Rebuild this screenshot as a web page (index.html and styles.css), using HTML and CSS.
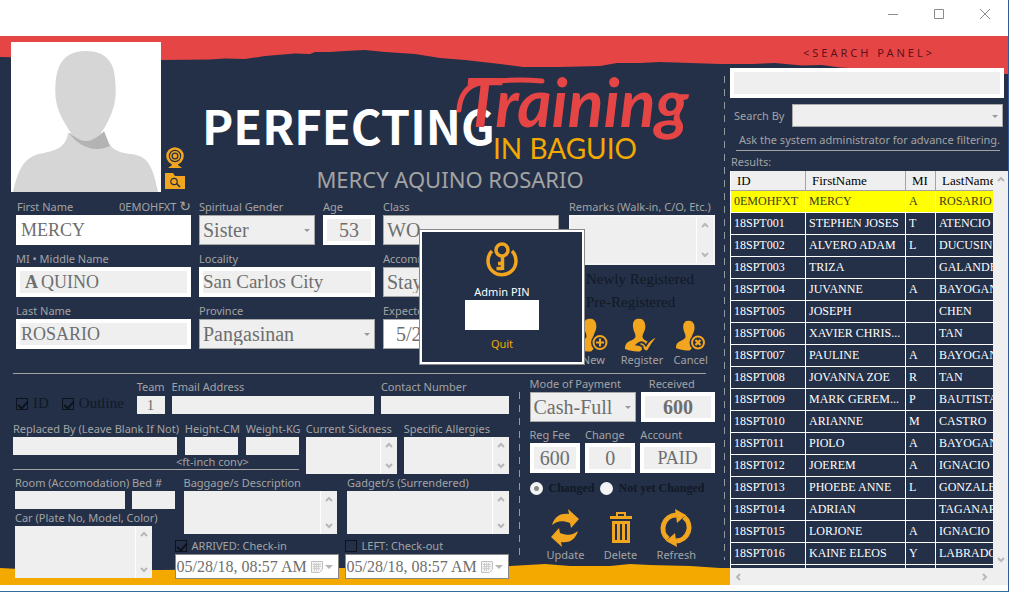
FILE: index.html
```html
<!DOCTYPE html>
<html lang="en">
<head>
<meta charset="utf-8">
<title>Perfecting Training in Baguio</title>
<link rel="stylesheet" href="styles.css">
</head>
<body>
<svg class="defs" aria-hidden="true">
  <symbol id="up" viewBox="0 0 8 6"><path d="M1 5 4 2l3 3" fill="none" stroke="#b8b8b8" stroke-width="2"/></symbol>
  <symbol id="down" viewBox="0 0 8 6"><path d="M1 1l3 3 3-3" fill="none" stroke="#b8b8b8" stroke-width="2"/></symbol>
  <symbol id="person" viewBox="0 0 34 34"><path d="M14 0C9.500 0 7.500 3.500 8 8.500c.4 4 2.500 6 2.500 9C10.500 20 8 21 5 22.500 1.500 24 0 26 0 30.500c5 2 10 2.500 15 2.500l9-9c-3-2-6.500-3-6.500-6 0-2.500 2.500-5 2.800-9C20.700 4 18.500 0 14 0z" fill="#f2a51e"/></symbol>
  <symbol id="calendar" viewBox="0 0 12 12"><path d="M.5.5h11v8l-3 3h-8z" fill="#f3f3f3" stroke="#c2c2c2"/><path d="M2 3.500h8M2 5.500h8M2 7.500h7M3.500 2v8M5.500 2v8M7.500 2v7" stroke="#cfcfcf"/></symbol>
</svg>
<div class="window">
  <header class="titlebar">
    <button type="button" aria-label="Minimize"><svg viewBox="0 0 12 12"><path d="M1 6.500h10"/></svg></button>
    <button type="button" aria-label="Maximize"><svg viewBox="0 0 12 12"><path d="M1.500 1.500h9v9h-9z"/></svg></button>
    <button type="button" aria-label="Close"><svg viewBox="0 0 12 12"><path d="M1 1l10 10M11 1 1 11"/></svg></button>
  </header>
  <div class="app">
    <svg class="torn torn-top" viewBox="0 0 1008 40" preserveAspectRatio="none" aria-hidden="true"><path fill="#e64545" d="M0 0H1008V38L900 37 870 33 840 31.500 822 29 802 29.500 775 27 752 28 720 28 690 27 660 26 640 27 617 27 600 30 560 31 523 31 500 28 465 24 440 22 415 18 385 16 365 14 345 15 330 16 315 16 310 18 295 17.500 265 20 245 23 225 22.500 210 23.500 161 24 60 22 0 21z"/></svg>
    <svg class="torn torn-bottom" viewBox="0 0 1008 22" preserveAspectRatio="none" aria-hidden="true"><path fill="#f4a900" d="M0 5 20 6 80 7 160 7 340 5 490 5 510 3 545 1 570 3 610 3 630 1 650 2 690 3 720 5 1008 6V22H0z"/></svg>
    <main class="main">
      <section class="brand">
        <svg class="avatar" viewBox="0 0 150 150" role="img" aria-label="Photo"><path fill="#fff" d="M0 0h150v150H0z"/><path fill="#d6d6d6" d="M2 150C7 129 12 116 28 112 42 109 55 107 57 91H93C97 104 103 110 119 112 137 113 142 125 147 150z"/><path fill="#b3b3b3" d="M58 91C66 98 86 100 93 89L99 104C84 111 68 105 58 91z"/><path fill="#d6d6d6" d="M75 9C96 9 104 21 104.500 42 106 60 101 72 95 83 90 93 83 99 75 99 67 99 60 93 55 83 48 72 43 60 44.500 42 46 21 54 9 75 9z"/></svg>
        <div class="photo-tools">
          <button type="button" aria-label="Webcam"><svg viewBox="0 0 20 22"><circle cx="10" cy="9" r="7.500" fill="none" stroke="#f2a51e" stroke-width="2.600"/><circle cx="10" cy="9" r="4.300" fill="none" stroke="#f2a51e" stroke-width="1.600"/><circle cx="10" cy="9" r="2.200" fill="#f2a51e"/><path fill="#f2a51e" d="M7 16h6v2l4 3H3l4-3z"/></svg></button>
          <button type="button" aria-label="Browse photo"><svg viewBox="0 0 20 16"><path fill="#f2a51e" d="M0 0h8l2 3h10v13H0z"/><circle cx="9" cy="8.500" r="3.200" fill="none" stroke="#233048" stroke-width="1.200"/><path d="M11.500 10.500 15 14" stroke="#233048" stroke-width="1.600"/></svg></button>
        </div>
        <div class="headline">
          <h1 class="logo">
            <span class="logo-main">PERFECTING</span>
            <span class="logo-script">Training</span>
            <span class="logo-place">IN BAGUIO</span>
            <svg class="swash" viewBox="0 0 90 36" aria-hidden="true"><path d="M3 33C4 20 10 9 24 6 45 3 65 2 86 4" fill="none" stroke="#e64545" stroke-width="5" stroke-linecap="round"/></svg>
          </h1>
          <p class="fullname">MERCY AQUINO ROSARIO</p>
        </div>
      </section>

      <section class="profile">
        <div class="stack">
          <div class="field"><div class="label-row"><label for="first">First Name</label><span>0EMOHFXT <button type="button" class="reload" aria-label="New ID">↻</button></span></div><input id="first" class="box plain" value="MERCY"></div>
          <div class="field"><label for="middle">MI • Middle Name</label><div class="box middle"><input class="initial" aria-label="Middle initial" value="A"><input id="middle" value="QUINO"></div></div>
          <div class="field"><label for="last">Last Name</label><input id="last" class="box" value="ROSARIO"></div>
        </div>
        <div class="stack">
          <div class="pair">
            <div class="field"><label for="gender">Spiritual Gender</label><div class="pick"><select id="gender"><option>Sister</option></select></div></div>
            <div class="field"><label for="age">Age</label><input id="age" class="box center big" value="53"></div>
          </div>
          <div class="field"><label for="locality">Locality</label><input id="locality" class="box place" value="San Carlos City"></div>
          <div class="field"><label for="province">Province</label><div class="pick"><select id="province"><option>Pangasinan</option></select></div></div>
        </div>
        <div class="stack">
          <div class="field"><label for="class">Class</label><div class="pick"><select id="class"><option>WO</option></select></div></div>
          <div class="field"><label for="accom">Accommodation</label><div class="pick"><select id="accom"><option>Stay</option></select></div></div>
          <div class="field"><label for="expected">Expected</label><input id="expected" class="box plain expected" value="5/28/18"></div>
        </div>
        <div class="side">
          <div class="field"><label for="remarks">Remarks (Walk-in, C/O, Etc.)</label><div class="memo memo-remarks"><textarea id="remarks"></textarea><span class="bar"><svg><use href="#up"/></svg><svg><use href="#down"/></svg></span></div></div>
          <label class="reg"><input type="radio" name="reg">Newly Registered</label>
          <label class="reg"><input type="radio" name="reg">Pre-Registered</label>
          <div class="actions people">
            <button type="button"><svg viewBox="0 0 34 34"><use href="#person" width="34" height="34"/><circle cx="24" cy="24" r="9" fill="#233048"/><circle cx="24" cy="24" r="6.500" fill="none" stroke="#f2a51e" stroke-width="2"/><path d="M24 20v8M20 24h8" stroke="#f2a51e" stroke-width="2"/></svg>New</button>
            <button type="button"><svg viewBox="0 0 34 34"><use href="#person" width="34" height="34"/><path d="M12 26q5-5 9 1 4-7 12.500-10-6 7-11 16-5 0-5-5-3-2-5.500-2z" fill="#f2a51e" stroke="#233048" stroke-width="1.800"/></svg>Register</button>
            <button type="button"><svg viewBox="0 0 34 34"><use href="#person" x="2" y="2" width="31" height="31"/><circle cx="24" cy="24" r="8.500" fill="#233048"/><circle cx="24" cy="24" r="6" fill="none" stroke="#f2a51e" stroke-width="2"/><path d="M21.500 21.500l5 5M26.500 21.500l-5 5" stroke="#f2a51e" stroke-width="2.400"/></svg>Cancel</button>
          </div>
        </div>
      </section>
      <hr class="rule">

      <div class="lower">
        <section class="details">
          <div class="row-contact">
            <div class="checks"><label class="tick"><input type="checkbox" checked>ID</label><label class="tick"><input type="checkbox" checked>Outline</label></div>
            <div class="field"><label for="team">Team</label><input id="team" class="slim center" value="1"></div>
            <div class="field"><label for="email">Email Address</label><input id="email" class="slim"></div>
            <div class="field"><label for="contact">Contact Number</label><input id="contact" class="slim"></div>
          </div>
          <div class="row-health">
            <div class="measure">
              <div class="measure-fields">
                <div class="field"><label for="replaced">Replaced By (Leave Blank If Not)</label><input id="replaced" class="slim"></div>
                <div class="field"><label for="height">Height-CM</label><input id="height" class="slim"></div>
                <div class="field"><label for="weight">Weight-KG</label><input id="weight" class="slim"></div>
              </div>
              <p class="conv">&lt;ft-inch conv&gt;</p>
            </div>
            <div class="field"><label for="sick">Current Sickness</label><div class="memo memo-s"><textarea id="sick"></textarea><span class="bar"><svg><use href="#up"/></svg><svg><use href="#down"/></svg></span></div></div>
            <div class="field"><label for="allergy">Specific Allergies</label><div class="memo memo-s"><textarea id="allergy"></textarea><span class="bar"><svg><use href="#up"/></svg><svg><use href="#down"/></svg></span></div></div>
          </div>
          <div class="row-stay">
            <div class="lodging">
              <div class="room">
                <div class="field"><label for="room">Room (Accomodation)</label><input id="room" class="slim"></div>
                <div class="field"><label for="bed">Bed #</label><input id="bed" class="slim"></div>
              </div>
              <div class="field car"><label for="car">Car (Plate No, Model, Color)</label><div class="memo memo-l"><textarea id="car"></textarea><span class="bar"><svg><use href="#up"/></svg><svg><use href="#down"/></svg></span></div></div>
            </div>
            <div class="belongings">
              <div class="bags">
                <div class="field"><label for="bag">Baggage/s Description</label><div class="memo memo-m"><textarea id="bag"></textarea><span class="bar"><svg><use href="#up"/></svg><svg><use href="#down"/></svg></span></div></div>
                <div class="field"><label for="gadget">Gadget/s (Surrendered)</label><div class="memo memo-m"><textarea id="gadget"></textarea><span class="bar"><svg><use href="#up"/></svg><svg><use href="#down"/></svg></span></div></div>
              </div>
              <div class="times">
                <div><label class="tick small"><input type="checkbox" checked>ARRIVED: Check-in</label><div class="date"><input aria-label="Check-in time" value="05/28/18, 08:57 AM"><svg><use href="#calendar"/></svg><i></i></div></div>
                <div><label class="tick small"><input type="checkbox">LEFT: Check-out</label><div class="date"><input aria-label="Check-out time" value="05/28/18, 08:57 AM"><svg><use href="#calendar"/></svg><i></i></div></div>
              </div>
            </div>
          </div>
        </section>
        <div class="dash dash-short"></div>
        <section class="payment">
          <div class="pay-top">
            <div class="field"><label for="mode">Mode of Payment</label><div class="pick"><select id="mode"><option>Cash-Full</option></select></div></div>
            <div class="field"><label for="received" class="indent">Received</label><input id="received" class="box center big strong" value="600"></div>
          </div>
          <div class="pay-mid">
            <div class="field"><label for="fee">Reg Fee</label><input id="fee" class="box center big" value="600"></div>
            <div class="field"><label for="change">Change</label><input id="change" class="box center big" value="0"></div>
            <div class="field"><label for="account">Account</label><input id="account" class="box center" value="PAID"></div>
          </div>
          <div class="changed"><label><input type="radio" name="chg" checked>Changed</label><label><input type="radio" name="chg">Not yet Changed</label></div>
          <div class="actions records">
            <button type="button"><svg viewBox="0 0 34 38"><g fill="#f2a51e"><path id="swap" d="M4 16C7 6 14 4 21 5l-1-5 11 10-8 9-1-5C14 11 9 12 4 16z"/><use href="#swap" transform="rotate(180 17 19)"/></g></svg>Update</button>
            <button type="button"><svg viewBox="0 0 34 38"><path fill="#f2a51e" d="M12 3h10v4h6v3H6V7h6zm2 2v2h6V5zM8 12h18v22H8zm3 3v16h2V15zm5 0v16h2V15zm5 0v16h2V15z" fill-rule="evenodd"/></svg>Delete</button>
            <button type="button"><svg viewBox="0 0 34 38"><g fill="none" stroke="#f2a51e" stroke-width="5"><path d="M9 30A13.500 13.500 0 0 1 17 6"/><path d="M25 8A13.500 13.500 0 0 1 17 32"/></g><path fill="#f2a51e" d="M16 0l11 6-9 8zM18 38 7 32l9-8z"/></svg>Refresh</button>
          </div>
        </section>
      </div>
    </main>
    <div class="dash dash-long"></div>
    <aside class="search">
      <h2>&lt;SEARCH PANEL&gt;</h2>
      <input class="box query" aria-label="Search">
      <div class="by"><label for="by">Search By</label><div class="pick pick-s"><select id="by"><option></option></select></div></div>
      <p class="hint">Ask the system administrator for advance filtering.</p>
      <p class="results">Results:</p>
      <div class="list">
        <div class="view">
        <table>
          <colgroup><col class="c-id"><col class="c-first"><col class="c-mi"><col></colgroup>
          <thead><tr><th>ID</th><th>FirstName</th><th>MI</th><th>LastName</th></tr></thead>
          <tbody>
            <tr class="on"><td>0EMOHFXT</td><td>MERCY</td><td>A</td><td>ROSARIO</td></tr>
            <tr><td>18SPT001</td><td>STEPHEN JOSES</td><td>T</td><td>ATENCIO</td></tr>
            <tr><td>18SPT002</td><td>ALVERO ADAM</td><td>L</td><td>DUCUSIN</td></tr>
            <tr><td>18SPT003</td><td>TRIZA</td><td></td><td>GALANDE</td></tr>
            <tr><td>18SPT004</td><td>JUVANNE</td><td>A</td><td>BAYOGAN</td></tr>
            <tr><td>18SPT005</td><td>JOSEPH</td><td></td><td>CHEN</td></tr>
            <tr><td>18SPT006</td><td>XAVIER CHRIS...</td><td></td><td>TAN</td></tr>
            <tr><td>18SPT007</td><td>PAULINE</td><td>A</td><td>BAYOGAN</td></tr>
            <tr><td>18SPT008</td><td>JOVANNA ZOE</td><td>R</td><td>TAN</td></tr>
            <tr><td>18SPT009</td><td>MARK GEREM...</td><td>P</td><td>BAUTISTA</td></tr>
            <tr><td>18SPT010</td><td>ARIANNE</td><td>M</td><td>CASTRO</td></tr>
            <tr><td>18SPT011</td><td>PIOLO</td><td>A</td><td>BAYOGAN</td></tr>
            <tr><td>18SPT012</td><td>JOEREM</td><td>A</td><td>IGNACIO</td></tr>
            <tr><td>18SPT013</td><td>PHOEBE ANNE</td><td>L</td><td>GONZALE</td></tr>
            <tr><td>18SPT014</td><td>ADRIAN</td><td></td><td>TAGANAP</td></tr>
            <tr><td>18SPT015</td><td>LORJONE</td><td>A</td><td>IGNACIO</td></tr>
            <tr><td>18SPT016</td><td>KAINE ELEOS</td><td>Y</td><td>LABRADO</td></tr>
            <tr class="cut"><td></td><td></td><td></td><td></td></tr>
          </tbody>
        </table>
        </div>
        <span class="bar"><svg><use href="#up"/></svg><svg><use href="#down"/></svg></span>
        <span class="hbar"><svg viewBox="0 0 6 8"><path d="M5 1 2 4l3 3"/></svg><svg viewBox="0 0 6 8"><path d="M1 1l3 3-3 3"/></svg></span>
      </div>
    </aside>
    <dialog class="pin" open>
      <svg viewBox="0 0 34 36" aria-hidden="true"><g fill="none" stroke="#f2a51e"><path d="M7 9A14 14 0 1 0 27 9" stroke-width="3.500"/><circle cx="17" cy="8" r="6" stroke-width="3.500"/><path d="M17.500 13v15M17 26.500h-5.500M17 21.500h-4" stroke-width="3.500"/></g></svg>
      <label for="pin">Admin PIN</label>
      <input id="pin" type="password">
      <button type="button">Quit</button>
    </dialog>
  </div>
</div>
</body>
</html>
```
FILE: styles.css
```css
* { box-sizing: border-box; }
body { margin: 0; background: #fff; color: #a3a3a3; font: 11px/16px "Noto Sans", "Open Sans", sans-serif; }
h1, h2, p { margin: 0; font-weight: 400; }
input, select, textarea, button { margin: 0; padding: 0; border: 0; border-radius: 0; background: none; color: inherit; font: inherit; min-width: 0; }
input, select, textarea { color: #6e6e6e; font-family: "Liberation Serif", serif; line-height: normal; }
svg { display: block; flex: none; }
label { white-space: nowrap; }
.defs { position: absolute; width: 0; height: 0; }

.window { min-height: 100vh; display: flex; flex-direction: column; border-right: 1px solid #2f5c97; border-bottom: 1px solid #2f6f97; padding-bottom: 6px; }
.titlebar { height: 36px; display: flex; justify-content: flex-end; align-items: flex-start; padding: 8px 17px 0 0; gap: 34px; }
.titlebar svg { width: 12px; height: 12px; fill: none; stroke: #8b8b8b; }

.app { position: relative; isolation: isolate; flex: 1; display: grid; grid-template-columns: 724fr 1px 283fr; background: #233048; overflow: hidden; }
.torn { position: absolute; left: 0; width: 100%; z-index: -1; }
.torn-top { top: 0; height: 40px; }
.torn-bottom { bottom: 0; height: 22px; }
.main { padding: 6px 9px 4px 11px; min-width: 0; }

.brand { display: flex; }
.avatar { width: 150px; height: 150px; }
.photo-tools { display: flex; flex-direction: column; justify-content: flex-end; gap: 4px; padding: 0 0 3px 4px; }
.photo-tools svg { width: 20px; }
.headline { flex: 1; display: flex; flex-direction: column; justify-content: flex-end; align-items: center; }
.logo { position: relative; width: 504px; height: 90px; line-height: 1; }
.logo-main { position: absolute; left: 4px; top: 25px; color: #fff; font: 700 47px/1 "Noto Sans CJK JP", sans-serif; }
.logo-script { position: absolute; left: 266px; top: -7px; color: #e64545; font: italic 700 66px/1 Lato, sans-serif; }
.logo-place { position: absolute; left: 295px; top: 58px; color: #f4a900; font: 400 28px/1 Lato, sans-serif; }
.swash { position: absolute; left: 258px; top: 1px; width: 90px; height: 36px; }
.fullname { font-size: 22px; line-height: 26px; }

.profile { display: grid; grid-template-columns: 175fr 176fr 176fr 148fr; column-gap: 8px; margin: 7px 0 0 5px; }
.stack { display: flex; flex-direction: column; gap: 6px; min-width: 0; }
.field { display: flex; flex-direction: column; min-width: 0; }
.pair { display: grid; grid-template-columns: 116fr 52fr; gap: 8px; }
.label-row { display: flex; justify-content: space-between; height: 16px; padding-left: 1px; }
.reload { font: 14px/14px "DejaVu Sans", sans-serif; height: 14px; }
.box { width: 100%; height: 30px; border: 4px solid #fff; background: #efefef; font-size: 18px; padding-left: 1px; }
.big { font-size: 20px; }
.place { font-size: 19px; padding-left: 0; }
.plain { background: #fff; }
.center { text-align: center; padding: 0; }
.strong { font-weight: 700; }
.expected { border: 1px solid #a8a8a8; padding-left: 12px; font-size: 20px; }
.middle { display: flex; align-items: center; padding-left: 5px; }
.middle input { font-size: 18px; height: 22px; flex: 1; }
.middle .initial { flex: 0 0 16px; font-weight: 700; }
.pick { position: relative; }
.pick select { display: block; appearance: none; width: 100%; height: 30px; padding-left: 3px; border: 1px solid #a8a8a8; background: #efefef; font-size: 20px; }
.pick::after { content: ""; position: absolute; right: 5px; top: calc(50% - 1px); border: 3px solid transparent; border-top-color: #999; border-bottom: 0; }

.side { padding-left: 2px; min-width: 0; }
.memo { display: flex; background: #efefef; }
.memo textarea { flex: 1; resize: none; overflow: hidden; height: 100%; }
.memo-remarks { height: 50px; border: 2px solid #f4f4f4; }
.memo-s { height: 37px; }
.memo-m { height: 43px; }
.memo-l { height: 52px; }
.bar { width: 17px; flex: none; display: flex; flex-direction: column; justify-content: space-between; align-items: center; padding: 5px 0; border-left: 1px solid #fff; background: #efefef; }
.bar svg { width: 8px; height: 6px; }
.reg { display: flex; align-items: center; gap: 4px; height: 23px; color: #121925; font: 15px/23px "Liberation Serif", serif; }
.reg input { width: 13px; height: 13px; }
.side .field { margin-bottom: 3px; }
.actions { display: flex; justify-content: space-between; line-height: 14px; }
.actions button { display: flex; flex-direction: column; align-items: center; }
.people { padding-top: 4px; }
.people svg { width: 34px; height: 35px; }
.people button { flex: 1; }
.rule { border: 0; border-top: 1px solid #a3a3a3; margin: 6px 9px 2px 2px; }

.lower { display: grid; grid-template-columns: 497fr 1px 186fr; column-gap: 10px; margin-left: 2px; }
.details { padding-top: 3px; min-width: 0; }
.dash { background: repeating-linear-gradient(#8f9b9f 0 7px, transparent 7px 13px); }
.dash-short { margin: 16px 0 21px; }
.dash-long { margin: 40px 0 25px; }
.slim { width: 100%; height: 18px; background: #efefef; font-size: 15px; }
.row-contact { display: grid; grid-template-columns: 117fr 28fr 203fr 128fr; column-gap: 7px; }
.row-contact .field { gap: 1px; }
.checks { display: flex; gap: 13px; padding: 14px 0 0 3px; }
.tick { display: flex; align-items: center; gap: 5px; color: #121925; font: 15px/17px "Liberation Serif", serif; }
.tick input { appearance: none; position: relative; width: 12px; height: 12px; border: 1px solid #0d131d; }
.tick input:checked::before { content: ""; position: absolute; left: 3px; top: 0; width: 4px; height: 8px; border: solid #0d131d; border-width: 0 2px 2px 0; transform: rotate(42deg); }
.small { color: inherit; font: inherit; height: 16px; }
.row-health { display: grid; grid-template-columns: 286fr 91fr 105fr; column-gap: 7px; margin-top: 7px; }
.measure { border-bottom: 1px solid #a3a3a3; margin-bottom: 4px; min-width: 0; }
.measure-fields { display: grid; grid-template-columns: 164fr 53fr 53fr; column-gap: 8px; }
.conv { line-height: 14px; padding-left: 163px; }
.row-stay { display: grid; grid-template-columns: 162fr 335fr; margin-top: 1px; }
.lodging { padding-left: 2px; min-width: 0; }
.room { display: grid; grid-template-columns: 111fr 43fr; gap: 7px; }
.car { margin: 1px 23px 0 0; }
.bags { display: grid; grid-template-columns: 154fr 162fr; gap: 10px; padding-left: 9px; }
.belongings { min-width: 0; }
.times { display: grid; grid-template-columns: 1fr 1fr; gap: 6px; margin-top: 4px; }
.date { display: flex; align-items: center; height: 25px; padding: 0 5px 0 1px; gap: 2px; border: 1px solid #888; background: #fff; }
.date input { flex: 1; width: 0; font-size: 16px; }
.date svg { width: 12px; height: 12px; }
.date i { border: 4px solid transparent; border-top-color: #b5b5b5; border-bottom: 0; }

.payment { min-width: 0; }
.pay-top { display: grid; grid-template-columns: 106fr 74fr; gap: 5px; }
.indent { padding-left: 8px; }
.pay-mid { display: grid; grid-template-columns: 50fr 50fr 74fr; gap: 5px; margin-top: 5px; }
.changed { display: flex; gap: 5px; padding-top: 8px; color: #121925; font: 700 12px/14px "Liberation Serif", serif; }
.changed label { display: flex; align-items: center; gap: 6px; }
.changed input { appearance: none; width: 13px; height: 13px; border: 4px solid #f4f4f4; border-radius: 50%; background: #f4f4f4; }
.changed input:checked { background: #888; }
.records { padding: 14px 19px 0 17px; }
.records svg { width: 34px; height: 38px; margin-bottom: 1px; }

.search { display: flex; flex-direction: column; padding: 9px 0 0 5px; min-width: 0; }
.search h2 { color: #5c121c; font-size: 11px; letter-spacing: 3px; text-align: center; }
.query { width: auto; margin: 7px 4px 0 0; }
.by { display: flex; align-items: center; gap: 8px; padding: 6px 5px 0 4px; }
.by .pick { flex: 1; }
.pick-s select { height: 23px; }
.hint { margin: 5px 8px 0 6px; padding: 0 3px 2px; border-bottom: 1px solid #a3a3a3; white-space: nowrap; }
.results { padding: 3px 0 1px 1px; }
.list { flex: 1; display: grid; grid-template-columns: minmax(0, 1fr) 15px; grid-template-rows: 1fr 17px; }
.view { overflow: hidden; }
.list .bar { width: auto; border: 0; }
.hbar { grid-column: 1 / -1; display: flex; justify-content: space-between; align-items: center; padding: 0 20px 0 5px; background: #efefef; }
.hbar svg { width: 6px; height: 8px; fill: none; stroke: #b8b8b8; stroke-width: 2; }
table { width: 100%; table-layout: fixed; border-collapse: separate; border-spacing: 0; font: 12px/21px "Liberation Serif", serif; color: #fff; }
.c-id { width: 76px; }
.c-first { width: 100px; }
.c-mi { width: 30px; }
th { height: 20px; padding: 0 0 0 6px; overflow: hidden; border-right: 1px solid #a3a3a3; border-bottom: 1px solid #a3a3a3; background: #efefef; color: #000; font-size: 13px; line-height: 19px; font-weight: 400; text-align: left; white-space: nowrap; }
td { height: 22px; padding: 0 0 0 3px; overflow: hidden; border-right: 1px solid #fff; border-bottom: 1px solid #fff; white-space: nowrap; }
th:first-child, td:first-child { border-left: 1px solid #fff; }
th:last-child, td:last-child { border-right: 0; }
.on td { background: #ff0; color: #3c3c20; }
.cut td { height: 3px; border-bottom: 0; }

.pin { position: absolute; left: 419px; top: 193px; z-index: 2; width: 166px; margin: 0; padding: 10px 0 8px; display: flex; flex-direction: column; align-items: center; border: 3px solid #fff; outline: 1px solid #8a8a8a; outline-offset: -1px; background: #233048; color: #fff; }
.pin svg { width: 34px; height: 36px; margin-bottom: 6px; }
.pin input { width: 74px; height: 30px; background: #fff; }
.pin button { margin: 6px 0 2px; color: #f4a900; }
```
